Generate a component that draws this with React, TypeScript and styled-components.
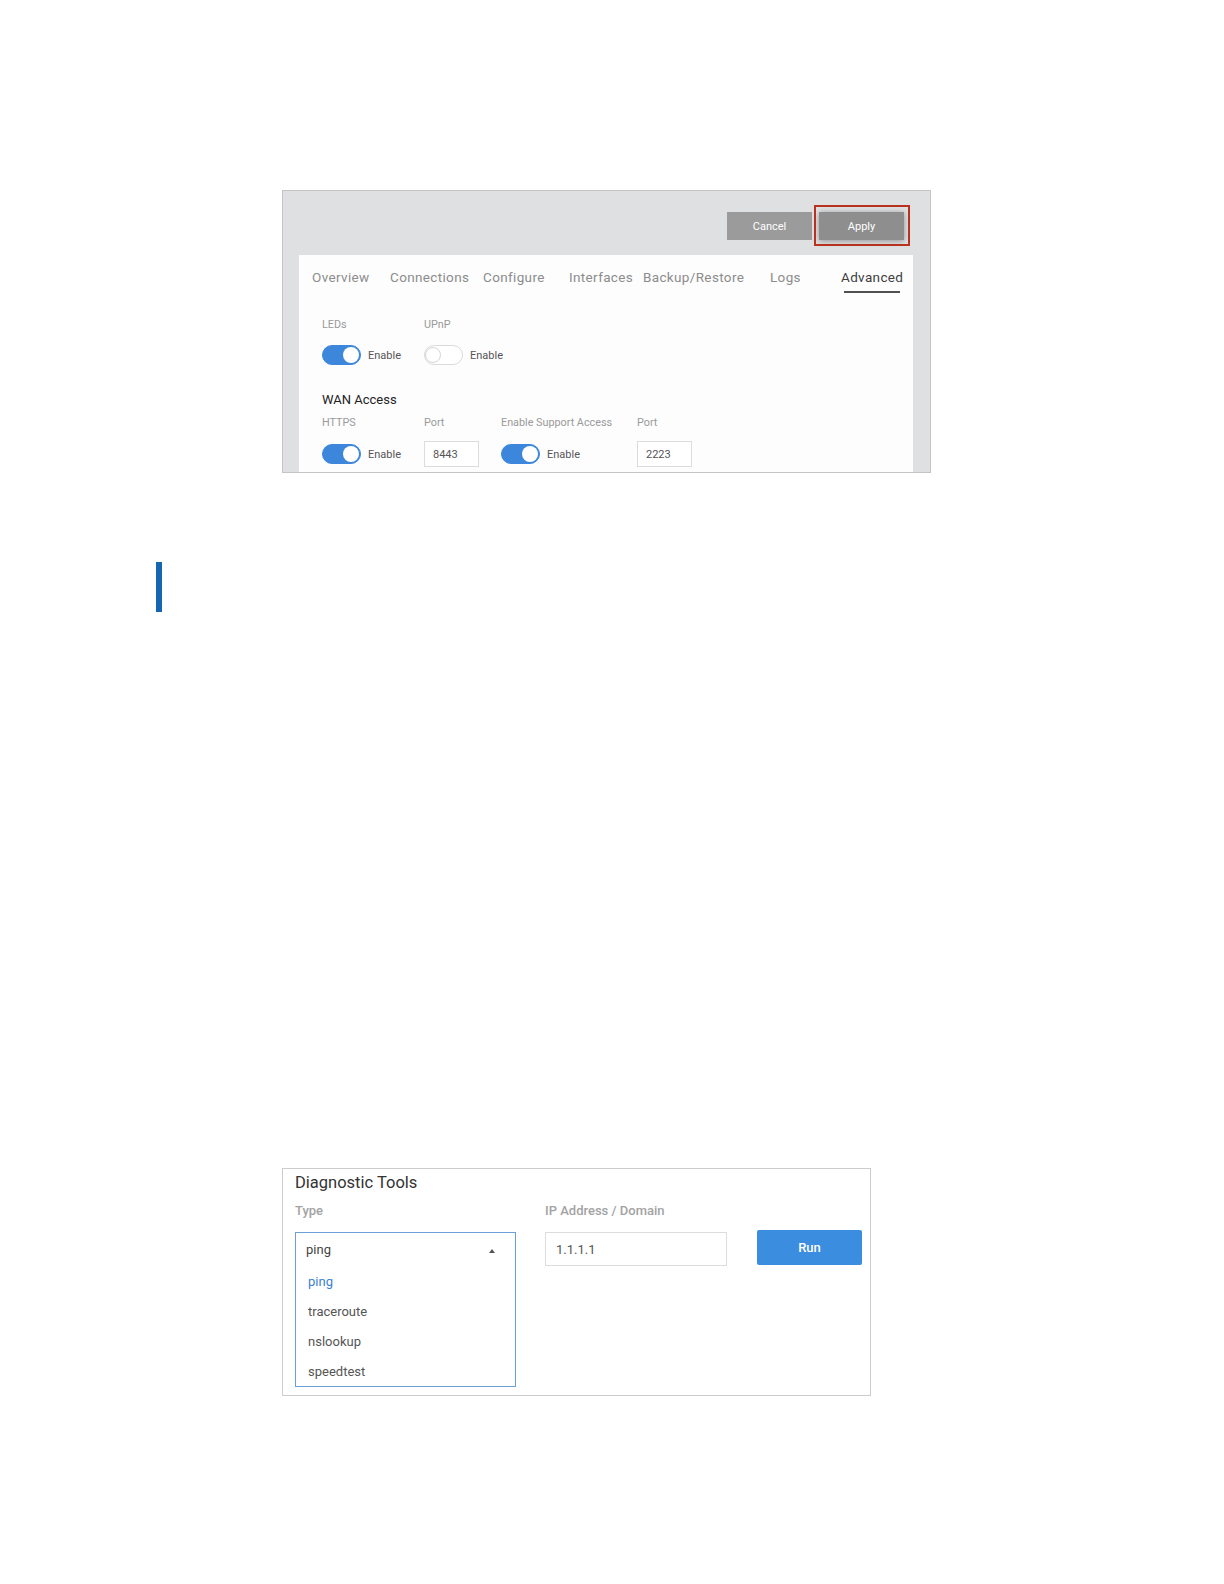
import React from 'react';
import styled, {createGlobalStyle} from 'styled-components';

const GlobalStyle = createGlobalStyle`
  body {
    margin: 0;
    background: #ffffff;
    font-family: Roboto, "Liberation Sans", sans-serif;
  }
`;

const Page = styled.div`
  width: 1224px;
  min-height: 1584px;
  display: flex;
  flex-direction: column;
  align-items: flex-start;
`;

const RouterShot = styled.div`
  margin: 190px 0 0 282px;
  width: 649px;
  height: 283px;
  box-sizing: border-box;
  border: 1px solid #c4c4c4;
  background: #dfe0e2;
  overflow: hidden;
  display: flex;
  flex-direction: column;
`;

const Toolbar = styled.div`
  height: 64px;
  flex-shrink: 0;
  display: flex;
  justify-content: flex-end;
  align-items: flex-start;
  gap: 7px;
  padding: 21px 26px 0 0;
  box-sizing: border-box;
`;

const GrayButton = styled.div<{$dark?: boolean}>`
  position: relative;
  width: 85px;
  height: 28px;
  display: flex;
  align-items: center;
  justify-content: center;
  background: ${p => (p.$dark ? '#8e8e8e' : '#9b9b9b')};
  color: #ffffff;
  font-size: 11px;
  box-shadow: ${p => (p.$dark ? '0 1px 6px rgba(0,0,0,0.35)' : 'none')};
`;

const Highlight = styled.span`
  position: absolute;
  left: -5px;
  top: -7px;
  right: -6px;
  bottom: -6px;
  border: 2px solid #b8321f;
  pointer-events: none;
`;

const Sheet = styled.div`
  margin: 0 17px 0 16px;
  flex: 1;
  background: #fdfdfd;
  padding: 0 0 0 13px;
`;

const Tabs = styled.div`
  display: flex;
  height: 40px;
  align-items: flex-start;
`;

const Tab = styled.div<{$w?: number; $active?: boolean}>`
  width: ${p => (p.$w ? `${p.$w}px` : 'auto')};
  padding-top: 14px;
  font-size: 13.5px;
  letter-spacing: 0.35px;
  color: ${p => (p.$active ? '#3d3d3d' : '#8c8c8c')};
  line-height: 16px;
  &::after {
    content: '';
    display: ${p => (p.$active ? 'block' : 'none')};
    margin: 6px 3px 0 3px;
    height: 2px;
    background: #505050;
  }
`;

const Settings = styled.div`
  padding: 23px 0 0 10px;
`;

const Row = styled.div<{$gap?: number}>`
  display: flex;
  align-items: center;
  margin-top: ${p => p.$gap ?? 0}px;
`;

const Col = styled.div<{$w: number}>`
  width: ${p => p.$w}px;
  display: flex;
  align-items: center;
`;

const FieldLabel = styled.div`
  font-size: 10.8px;
  color: #9a9a9a;
  line-height: 14px;
`;

const Toggle = styled.div<{$on?: boolean}>`
  width: 39px;
  height: 20px;
  box-sizing: border-box;
  border-radius: 10px;
  background: ${p => (p.$on ? '#3c87db' : '#ffffff')};
  border: 1px solid ${p => (p.$on ? '#3c87db' : '#dadada')};
  position: relative;
  flex-shrink: 0;
  &::after {
    content: '';
    position: absolute;
    top: 1px;
    ${p => (p.$on ? 'right: 1px;' : 'left: 0;')}
    width: 16px;
    height: 16px;
    box-sizing: border-box;
    border-radius: 50%;
    background: #ffffff;
    border: ${p => (p.$on ? 'none' : '1px solid #d6d6d6')};
  }
`;

const ToggleText = styled.span`
  margin-left: 7px;
  font-size: 11px;
  color: #555555;
`;

const PortBox = styled.div`
  width: 55px;
  height: 26px;
  box-sizing: border-box;
  border: 1px solid #dcdcdc;
  background: #ffffff;
  display: flex;
  align-items: center;
  padding-left: 8px;
  font-size: 11px;
  color: #555555;
`;

const SectionTitle = styled.div`
  font-size: 13px;
  color: #222222;
  margin-top: 27px;
  line-height: 16px;
`;

const Marker = styled.div`
  margin: 89px 0 0 156px;
  width: 6px;
  height: 50px;
  background: #1565b0;
`;

const DiagPanel = styled.div`
  margin: 556px 0 0 282px;
  width: 589px;
  height: 228px;
  box-sizing: border-box;
  border: 1px solid #cccccc;
  padding: 4px 0 0 12px;
  background: #ffffff;
`;

const DiagTitle = styled.div`
  font-size: 16.5px;
  color: #333333;
  line-height: 20px;
`;

const DiagGrid = styled.div`
  display: flex;
  margin-top: 10px;
`;

const DiagCol = styled.div<{$w: number}>`
  width: ${p => p.$w}px;
  display: flex;
  flex-direction: column;
`;

const DiagLabel = styled.div`
  font-size: 13px;
  font-weight: 500;
  color: #a3a3a3;
  line-height: 16px;
  height: 29px;
`;

const SelectBox = styled.div`
  width: 221px;
  height: 155px;
  box-sizing: border-box;
  border: 1px solid #6a9fd8;
  display: flex;
  flex-direction: column;
`;

const SelectHead = styled.div`
  height: 33px;
  display: flex;
  align-items: center;
  justify-content: space-between;
  padding: 0 20px 0 10px;
  font-size: 13px;
  color: #444444;
`;

const Caret = styled.span`
  width: 0;
  height: 0;
  border-left: 3.5px solid transparent;
  border-right: 3.5px solid transparent;
  border-bottom: 4px solid #555555;
  margin-top: 3px;
`;

const Option = styled.div<{$selected?: boolean}>`
  height: 30px;
  display: flex;
  align-items: center;
  padding-left: 12px;
  font-size: 13px;
  color: ${p => (p.$selected ? '#3b7fd4' : '#555555')};
`;

const IpInput = styled.div`
  width: 182px;
  height: 34px;
  box-sizing: border-box;
  border: 1px solid #dddddd;
  display: flex;
  align-items: center;
  padding-left: 10px;
  font-size: 13px;
  color: #555555;
`;

const RunButton = styled.div`
  width: 105px;
  height: 35px;
  margin-top: -2px;
  border-radius: 2px;
  background: #3b8de0;
  color: #ffffff;
  font-size: 13px;
  font-weight: 500;
  display: flex;
  align-items: center;
  justify-content: center;
`;

const tabs = [
  {label: 'Overview', w: 78},
  {label: 'Connections', w: 93},
  {label: 'Configure', w: 86},
  {label: 'Interfaces', w: 74},
  {label: 'Backup/Restore', w: 127},
  {label: 'Logs', w: 71},
  {label: 'Advanced', active: true},
];

const options = ['ping', 'traceroute', 'nslookup', 'speedtest'];

const App = () => {
  return (
    <Page>
      <GlobalStyle />
      <RouterShot>
        <Toolbar>
          <GrayButton>Cancel</GrayButton>
          <GrayButton $dark>
            Apply
            <Highlight />
          </GrayButton>
        </Toolbar>
        <Sheet>
          <Tabs>
            {tabs.map(t => (
              <Tab key={t.label} $w={t.w} $active={t.active}>{t.label}</Tab>
            ))}
          </Tabs>
          <Settings>
            <Row>
              <Col $w={102}><FieldLabel>LEDs</FieldLabel></Col>
              <Col $w={100}><FieldLabel>UPnP</FieldLabel></Col>
            </Row>
            <Row $gap={13}>
              <Col $w={102}><Toggle $on /><ToggleText>Enable</ToggleText></Col>
              <Col $w={100}><Toggle /><ToggleText>Enable</ToggleText></Col>
            </Row>
            <SectionTitle>WAN Access</SectionTitle>
            <Row $gap={8}>
              <Col $w={102}><FieldLabel>HTTPS</FieldLabel></Col>
              <Col $w={77}><FieldLabel>Port</FieldLabel></Col>
              <Col $w={136}><FieldLabel>Enable Support Access</FieldLabel></Col>
              <Col $w={60}><FieldLabel>Port</FieldLabel></Col>
            </Row>
            <Row $gap={11}>
              <Col $w={102}><Toggle $on /><ToggleText>Enable</ToggleText></Col>
              <Col $w={77}><PortBox>8443</PortBox></Col>
              <Col $w={136}><Toggle $on /><ToggleText>Enable</ToggleText></Col>
              <Col $w={60}><PortBox>2223</PortBox></Col>
            </Row>
          </Settings>
        </Sheet>
      </RouterShot>

      <Marker />

      <DiagPanel>
        <DiagTitle>Diagnostic Tools</DiagTitle>
        <DiagGrid>
          <DiagCol $w={250}>
            <DiagLabel>Type</DiagLabel>
            <SelectBox>
              <SelectHead>
                <span>ping</span>
                <Caret />
              </SelectHead>
              {options.map((o, i) => (
                <Option key={o} $selected={i === 0}>{o}</Option>
              ))}
            </SelectBox>
          </DiagCol>
          <DiagCol $w={212}>
            <DiagLabel>IP Address / Domain</DiagLabel>
            <IpInput>1.1.1.1</IpInput>
          </DiagCol>
          <DiagCol $w={105}>
            <DiagLabel />
            <RunButton>Run</RunButton>
          </DiagCol>
        </DiagGrid>
      </DiagPanel>
    </Page>
  );
};

export default App;
